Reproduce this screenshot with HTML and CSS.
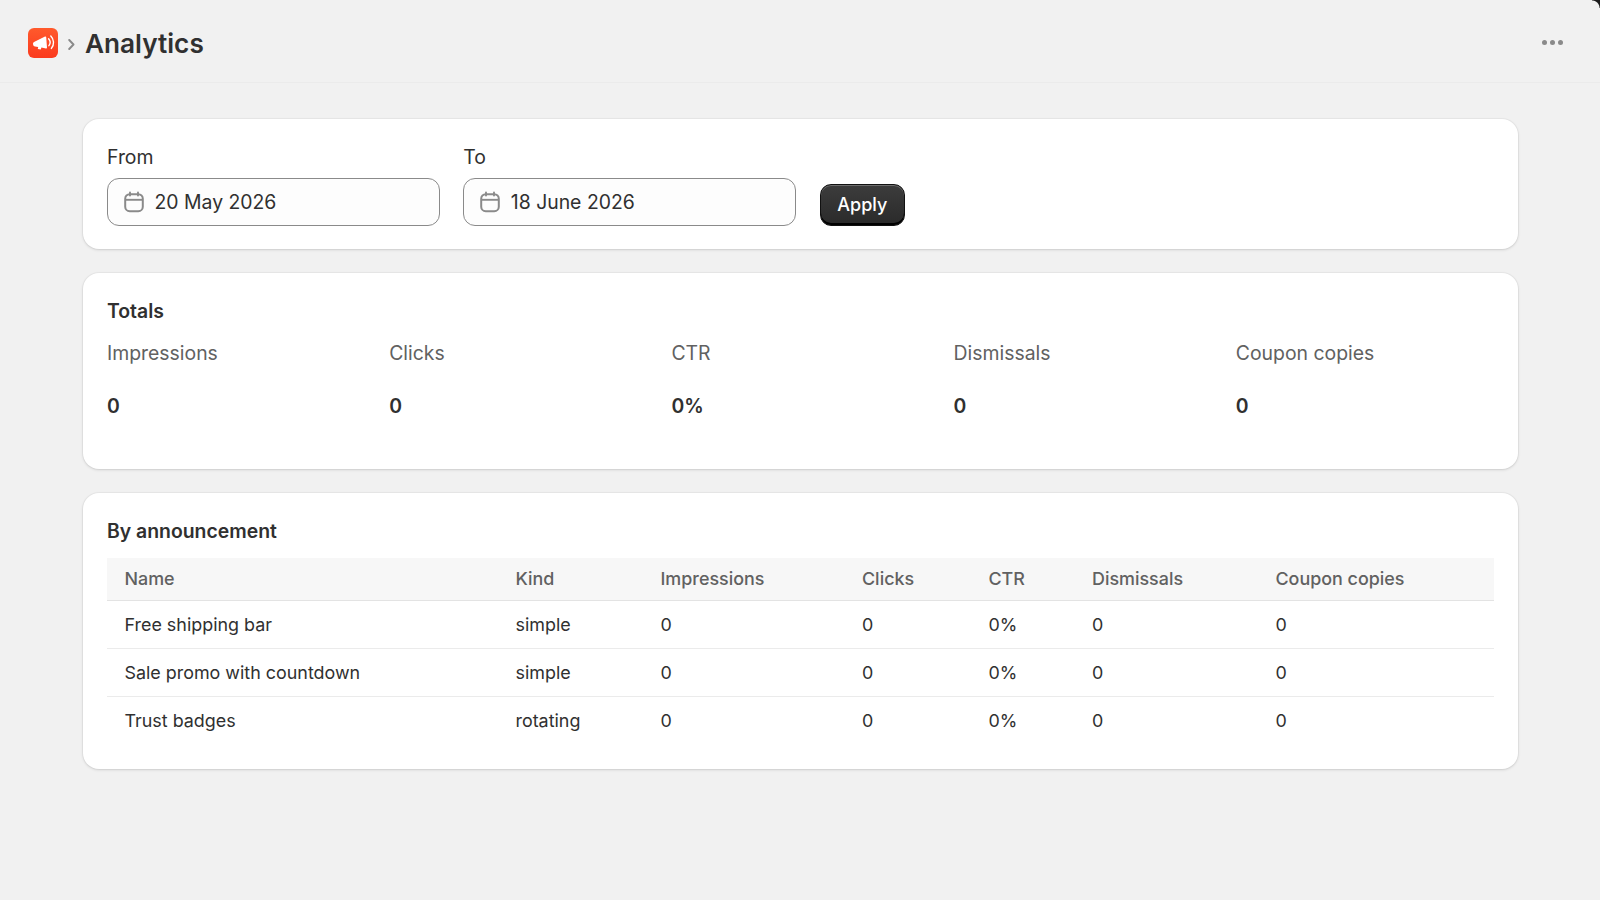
FILE: index.html
```html
<!DOCTYPE html>
<html lang="en">
<head>
    <meta charset="UTF-8">
    <meta name="viewport" content="width=device-width, initial-scale=1.0">
    <title>Analytics</title>
    <link rel="stylesheet" href="styles.css">
</head>
<body>
    <div class="window-corner"></div>
    <header class="topbar">
        <div class="crumbs">
            <span class="app-icon">
                <svg width="30" height="30" viewBox="0 0 30 30">
                    <path d="M5 15.5Q5 14.6 6 14L17 8.6Q18 8.2 18.2 9.2L19 19.5Q19 20.6 18 20.4L13.4 19.6 12.8 21.4 9.8 20.9 10.2 19 7 18.5Q5.4 18.2 5.2 17Z" fill="#fff"/>
                    <path d="M20.6 10.8a5.4 5.4 0 0 1 .3 6.9M22.8 8a9.2 9.2 0 0 1 .6 12.4" fill="none" stroke="#fff" stroke-width="1.4" stroke-linecap="round"/>
                </svg>
            </span>
            <svg class="chevron" width="7" height="11" viewBox="0 0 7 11">
                <path d="M1.2 1l4.3 4.5-4.3 4.5" fill="none" stroke="#8a8a8a" stroke-width="1.9" stroke-linecap="round" stroke-linejoin="round"/>
            </svg>
            <h1 class="page-title">Analytics</h1>
        </div>
        <div class="dots"><i></i><i></i><i></i></div>
    </header>

    <main class="content">
        <!-- Date range -->
        <section class="card range">
            <div class="field">
                <label class="field-label">From</label>
                <div class="date-input">
                    <svg class="cal" width="20" height="22" viewBox="0 0 20 22">
                        <path d="M6 1.5v3M14 1.5v3" stroke="#8a8a8a" stroke-width="1.9" stroke-linecap="round"/>
                        <rect x="1.2" y="3.2" width="17.6" height="17" rx="4.5" fill="none" stroke="#8a8a8a" stroke-width="2"/>
                        <path d="M1.5 8.8h17" stroke="#8a8a8a" stroke-width="1.9"/>
                    </svg>
                    <span>20 May 2026</span>
                </div>
            </div>
            <div class="field">
                <label class="field-label">To</label>
                <div class="date-input">
                    <svg class="cal" width="20" height="22" viewBox="0 0 20 22">
                        <path d="M6 1.5v3M14 1.5v3" stroke="#8a8a8a" stroke-width="1.9" stroke-linecap="round"/>
                        <rect x="1.2" y="3.2" width="17.6" height="17" rx="4.5" fill="none" stroke="#8a8a8a" stroke-width="2"/>
                        <path d="M1.5 8.8h17" stroke="#8a8a8a" stroke-width="1.9"/>
                    </svg>
                    <span>18 June 2026</span>
                </div>
            </div>
            <button class="apply">Apply</button>
        </section>

        <!-- Totals -->
        <section class="card totals">
            <h2 class="card-title">Totals</h2>
            <div class="stats">
                <div class="stat"><div class="stat-label">Impressions</div><div class="stat-value">0</div></div>
                <div class="stat"><div class="stat-label">Clicks</div><div class="stat-value">0</div></div>
                <div class="stat"><div class="stat-label">CTR</div><div class="stat-value">0%</div></div>
                <div class="stat"><div class="stat-label">Dismissals</div><div class="stat-value">0</div></div>
                <div class="stat"><div class="stat-label">Coupon copies</div><div class="stat-value">0</div></div>
            </div>
        </section>

        <!-- Per announcement -->
        <section class="card announcements">
            <h2 class="card-title">By announcement</h2>
            <table class="report">
                <thead>
                    <tr>
                        <th class="col-name">Name</th>
                        <th class="col-kind">Kind</th>
                        <th class="col-imp">Impressions</th>
                        <th class="col-clicks">Clicks</th>
                        <th class="col-ctr">CTR</th>
                        <th class="col-dis">Dismissals</th>
                        <th>Coupon copies</th>
                    </tr>
                </thead>
                <tbody>
                    <tr><td>Free shipping bar</td><td>simple</td><td>0</td><td>0</td><td>0%</td><td>0</td><td>0</td></tr>
                    <tr><td>Sale promo with countdown</td><td>simple</td><td>0</td><td>0</td><td>0%</td><td>0</td><td>0</td></tr>
                    <tr><td>Trust badges</td><td>rotating</td><td>0</td><td>0</td><td>0%</td><td>0</td><td>0</td></tr>
                </tbody>
            </table>
        </section>
    </main>
</body>
</html>
```

FILE: styles.css
```css
html, body {
    height: 100%;
}

body {
    margin: 0;
    background-color: #f1f1f1;
    color: #303030;
    font-family: Inter, "Noto Sans", sans-serif;
    font-size: 19.4px;
    overflow: hidden;
}

.window-corner {
    position: absolute;
    top: 0;
    right: 0;
    width: 8px;
    height: 8px;
    background: radial-gradient(circle at 0 100%, transparent 7px, #1c1c1c 8px);
}

.topbar {
    height: 83px;
    box-sizing: border-box;
    padding: 3px 37px 0 28px;
    border-bottom: 1px solid #ebebeb;
    display: flex;
    align-items: center;
    justify-content: space-between;
}

.crumbs {
    display: flex;
    align-items: center;
}

.app-icon {
    width: 30px;
    height: 30px;
    border-radius: 6px;
    background: linear-gradient(180deg, #ff5a2c, #fb3a1e);
    display: flex;
}

.chevron {
    margin: 4px 10px 0 10px;
}

.page-title {
    margin: 2px 0 0;
    font-size: 26.2px;
    font-weight: 600;
}

.dots {
    display: flex;
    gap: 3px;
}

.dots i {
    width: 5px;
    height: 5px;
    border-radius: 50%;
    background-color: #8a8a8a;
}

.content {
    padding: 36px 82px 0 83px;
    display: flex;
    flex-direction: column;
    gap: 24px;
}

.card {
    background-color: #fff;
    border-radius: 16px;
    padding: 24px;
    box-shadow: 0 1px 3px rgba(0, 0, 0, 0.13), 0 0 0 1px rgba(0, 0, 0, 0.03);
}

.range {
    display: flex;
    align-items: flex-end;
    gap: 23.3px;
    padding-bottom: 23px;
}

.field {
    width: 333px;
}

.field-label {
    display: block;
    line-height: 28px;
    margin-bottom: 7px;
}

.date-input {
    height: 48px;
    box-sizing: border-box;
    border: 1px solid #8a8a8a;
    border-radius: 12px;
    background-color: #fdfdfd;
    padding: 0 16px;
    display: flex;
    align-items: center;
    gap: 10.5px;
}

.apply {
    height: 42px;
    width: 85.5px;
    padding: 0 0 2px;
    border: 1px solid #111;
    border-radius: 11px;
    background: linear-gradient(180deg, #3c3c3c, #2a2a2a);
    box-shadow: inset 0 1px 0 rgba(255, 255, 255, 0.25), inset 0 -2px 0 #000;
    color: #fff;
    font-family: inherit;
    font-size: 18px;
    font-weight: 500;
}

.card-title {
    margin: 0;
    font-size: 19.4px;
    font-weight: 600;
    line-height: 29px;
}

.totals {
    padding-bottom: 49px;
}

.stats {
    display: grid;
    grid-template-columns: repeat(5, 1fr);
    gap: 24px;
    margin-top: 13px;
}

.stat-label {
    color: #616161;
    line-height: 28px;
}

.stat-value {
    margin-top: 25px;
    font-weight: 600;
    line-height: 28px;
}

.announcements {
    padding-bottom: 25px;
}

.report {
    width: 100%;
    margin-top: 12px;
    border-collapse: collapse;
    table-layout: fixed;
    font-size: 17.9px;
}

.report th {
    box-sizing: border-box;
    height: 42px;
    padding: 0 17.5px;
    background-color: #f7f7f7;
    border-bottom: 1px solid #e3e3e3;
    color: #616161;
    font-weight: 500;
    text-align: left;
}

.report td {
    height: 47px;
    padding: 0 17.5px;
    border-bottom: 1px solid #ebebeb;
}

.report tr:last-child td {
    border-bottom: none;
}

.col-name { width: 391px; }
.col-kind { width: 145px; }
.col-imp { width: 201.5px; }
.col-clicks { width: 126.5px; }
.col-ctr { width: 103.5px; }
.col-dis { width: 183.5px; }
```
